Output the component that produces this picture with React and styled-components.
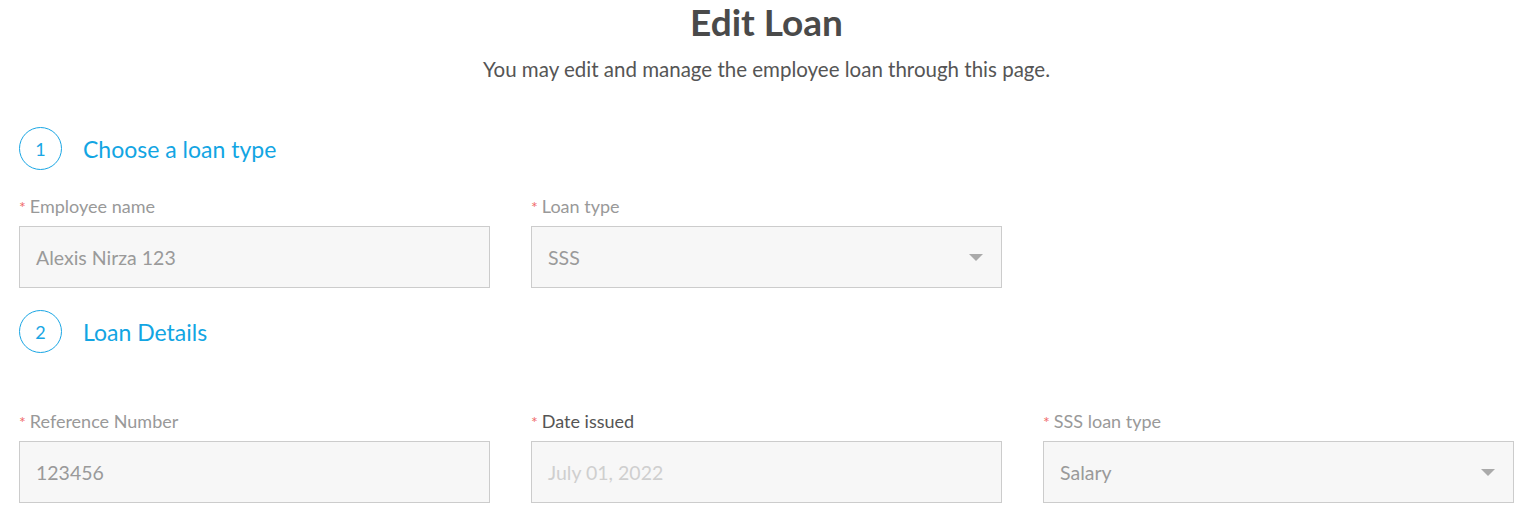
import React from 'react';
import styled, { createGlobalStyle } from 'styled-components';

const GlobalStyle = createGlobalStyle`
    body {
        margin: 0;
        background: #fff;
        font-family: "Source Sans Pro", Lato, "Noto Sans", sans-serif;
    }
`;

const Page = styled.div`
    padding: 0 19px;
`;

const Header = styled.div`
    text-align: center;
    padding-top: 2px;
`;

const Title = styled.h1`
    margin: 0;
    font-size: 37px;
    line-height: 40px;
    font-weight: 700;
    color: #4a4a4a;
`;

const Subtitle = styled.p`
    margin: 15px 0 0;
    font-size: 20.5px;
    line-height: 24px;
    color: #555;
`;

const Step = styled.div`
    display: flex;
    align-items: center;
    gap: 21px;
    margin-top: ${p => p.top}px;
    margin-bottom: ${p => p.bottom}px;
`;

const StepNumber = styled.div`
    width: 41px;
    height: 41px;
    border: 1px solid #1aa6e4;
    border-radius: 50%;
    display: flex;
    align-items: center;
    justify-content: center;
    color: #1aa6e4;
    font-size: 18px;
`;

const StepTitle = styled.h2`
    margin: 0;
    font-size: 23px;
    font-weight: 400;
    color: #12a5e3;
`;

const Row = styled.div`
    display: grid;
    grid-template-columns: repeat(3, 1fr);
    column-gap: 41px;
`;

const Field = styled.div`
    display: flex;
    flex-direction: column;
`;

const Label = styled.label`
    font-size: 18px;
    line-height: 20px;
    color: ${p => (p.dark ? '#555' : '#999')};
    margin-bottom: 9px;
    &::before {
        content: '*';
        color: #f06a6a;
        margin-right: 4px;
        font-size: 16px;
    }
`;

const Box = styled.div`
    height: 60px;
    border: 1px solid #cccccc;
    background: #f7f7f7;
    display: flex;
    align-items: center;
    padding: 0 17px 0 16px;
    font-size: 19.5px;
    color: ${p => (p.faded ? '#cfcfcf' : '#9a9a9a')};
`;

const Caret = styled.span`
    margin-left: auto;
    margin-right: 1px;
    width: 0;
    height: 0;
    border-left: 7px solid transparent;
    border-right: 7px solid transparent;
    border-top: 7px solid #aaa;
`;

function Input({ label, value, select, faded, darkLabel }) {
    return (
        <Field>
            <Label dark={darkLabel}>{label}</Label>
            <Box faded={faded}>
                {value}
                {select && <Caret />}
            </Box>
        </Field>
    );
}

export default function App() {
    return (
        <Page>
            <GlobalStyle />
            <Header>
                <Title>Edit Loan</Title>
                <Subtitle>You may edit and manage the employee loan through this page.</Subtitle>
            </Header>

            <Step top={46} bottom={26}>
                <StepNumber>1</StepNumber>
                <StepTitle>Choose a loan type</StepTitle>
            </Step>
            <Row>
                <Input label="Employee name" value="Alexis Nirza 123" />
                <Input label="Loan type" value="SSS" select />
            </Row>

            <Step top={22} bottom={58}>
                <StepNumber>2</StepNumber>
                <StepTitle>Loan Details</StepTitle>
            </Step>
            <Row>
                <Input label="Reference Number" value="123456" />
                <Input label="Date issued" value="July 01, 2022" faded darkLabel />
                <Input label="SSS loan type" value="Salary" select />
            </Row>
        </Page>
    );
}
